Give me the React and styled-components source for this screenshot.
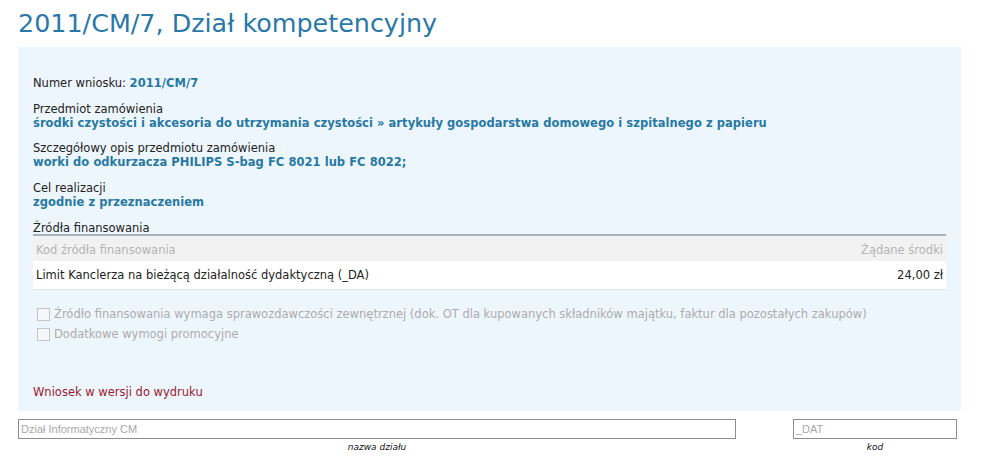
import React from "react"
import styled, { createGlobalStyle } from "styled-components"

const GlobalStyle = createGlobalStyle`
    html, body {
        margin: 0;
        padding: 0;
        background: #ffffff;
    }
    body {
        font-family: "DejaVu Sans", Verdana, sans-serif;
        font-size: 11.5px;
        color: #222222;
    }
`

const Page = styled.div`
    width: 1004px;
    padding: 0 0 0 18px;
    box-sizing: border-box;
`

const Title = styled.h1`
    margin: 0;
    padding-top: 7px;
    height: 40px;
    font-weight: normal;
    font-size: 25.4px;
    line-height: 32px;
    color: #2a78a8;
`

const Panel = styled.div`
    width: 943px;
    box-sizing: border-box;
    background: #eef6fd;
    padding: 29px 15px 12px 15px;
    margin-bottom: 8px;
`

const Field = styled.div`
    margin-bottom: 11.5px;
    line-height: 14px;
`

const Label = styled.div`
    display: ${p => (p.inline ? "inline" : "block")};
    color: #222222;
`

const Value = styled.div`
    display: ${p => (p.inline ? "inline" : "block")};
    font-weight: bold;
    letter-spacing: 0.05px;
    color: #2878a4;
`

const SectionHead = styled.div`
    line-height: 12px;
    margin-top: 13.5px;
    padding-bottom: 0;
    border-bottom: 2px solid #a9b1b8;
`

const Table = styled.table`
    width: 100%;
    border-collapse: collapse;
`

const HeadCell = styled.th`
    background: #f2f2f2;
    color: #b4b4b4;
    font-weight: normal;
    text-align: ${p => p.align || "left"};
    height: 23px;
    padding: 2px 3px 0 3px;
`

const Cell = styled.td`
    background: #ffffff;
    text-align: ${p => p.align || "left"};
    height: 28px;
    padding: 0 3px;
    border-bottom: 1px solid #dde3e8;
`

const Options = styled.div`
    margin-top: 17px;
    padding-left: 4px;
    display: flex;
    flex-direction: column;
    gap: 6px;
`

const OptionRow = styled.label`
    display: flex;
    align-items: center;
    gap: 4px;
    color: #acacac;
    line-height: 14px;
`

const Box = styled.span`
    display: inline-block;
    flex: none;
    width: 11px;
    height: 11px;
    border: 1px solid #c4c4c4;
    background: #f4f8fb;
`

const PrintLink = styled.a`
    display: block;
    margin-top: 44px;
    color: #9a1a2e;
    text-decoration: none;
    line-height: 14px;
`

const Footer = styled.div`
    display: flex;
    gap: 57px;
`

const InputGroup = styled.div`
    width: ${p => p.width}px;
    display: flex;
    flex-direction: column;
    align-items: center;
`

const TextBox = styled.div`
    width: 100%;
    height: 20px;
    box-sizing: border-box;
    border: 1px solid #8a8e92;
    background: #ffffff;
    font-family: "Liberation Sans", Arial, sans-serif;
    font-size: 11px;
    line-height: 18px;
    padding-left: 2px;
    color: #a8a8a8;
`

const Caption = styled.div`
    font-size: 9px;
    font-style: italic;
    color: #111111;
    line-height: 12px;
    margin-top: 2px;
`

const App = () => (
    <Page>
        <GlobalStyle />
        <Title>2011/CM/7, Dział kompetencyjny</Title>
        <Panel>
            <Field>
                <Label inline>Numer wniosku: </Label>
                <Value inline>2011/CM/7</Value>
            </Field>
            <Field>
                <Label>Przedmiot zamówienia</Label>
                <Value>środki czystości i akcesoria do utrzymania czystości » artykuły gospodarstwa domowego i szpitalnego z papieru</Value>
            </Field>
            <Field>
                <Label>Szczegółowy opis przedmiotu zamówienia</Label>
                <Value>worki do odkurzacza PHILIPS S-bag FC 8021 lub FC 8022;</Value>
            </Field>
            <Field>
                <Label>Cel realizacji</Label>
                <Value>zgodnie z przeznaczeniem</Value>
            </Field>
            <SectionHead>Źródła finansowania</SectionHead>
            <Table>
                <thead>
                    <tr>
                        <HeadCell>Kod źródła finansowania</HeadCell>
                        <HeadCell align="right">Żądane środki</HeadCell>
                    </tr>
                </thead>
                <tbody>
                    <tr>
                        <Cell>Limit Kanclerza na bieżącą działalność dydaktyczną (_DA)</Cell>
                        <Cell align="right">24,00 zł</Cell>
                    </tr>
                </tbody>
            </Table>
            <Options>
                <OptionRow><Box />Źródło finansowania wymaga sprawozdawczości zewnętrznej (dok. OT dla kupowanych składników majątku, faktur dla pozostałych zakupów)</OptionRow>
                <OptionRow><Box />Dodatkowe wymogi promocyjne</OptionRow>
            </Options>
            <PrintLink href="#">Wniosek w wersji do wydruku</PrintLink>
        </Panel>
        <Footer>
            <InputGroup width={718}>
                <TextBox>Dział Informatyczny CM</TextBox>
                <Caption>nazwa działu</Caption>
            </InputGroup>
            <InputGroup width={164}>
                <TextBox>_DAT</TextBox>
                <Caption>kod</Caption>
            </InputGroup>
        </Footer>
    </Page>
)

export default App
